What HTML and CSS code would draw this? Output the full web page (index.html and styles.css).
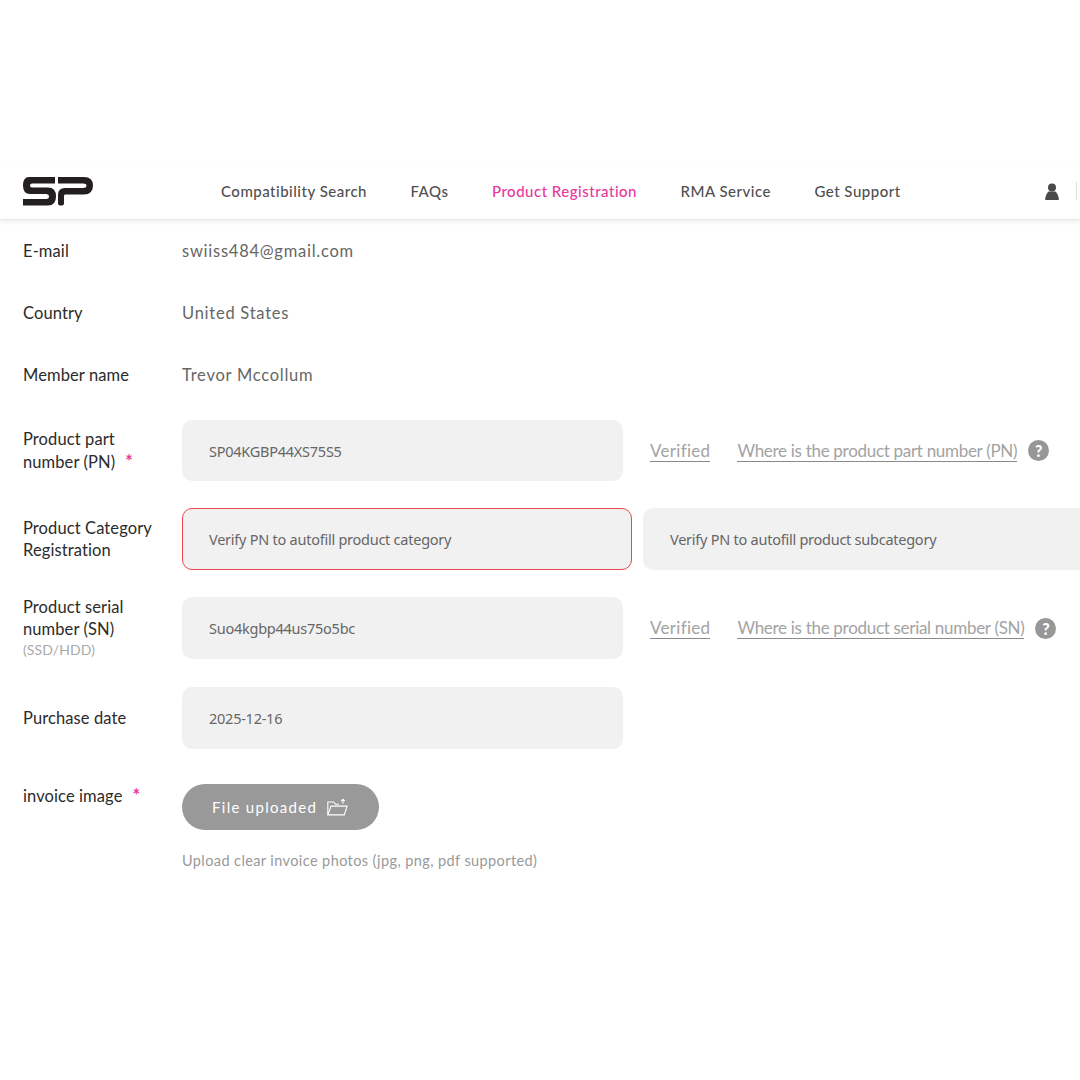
FILE: index.html
```html
<!DOCTYPE html>
<html lang="en">
<head>
    <meta charset="UTF-8">
    <meta name="viewport" content="width=device-width, initial-scale=1.0">
    <title>Product Registration</title>
    <link rel="stylesheet" href="styles.css">
</head>
<body>
    <header class="topbar">
        <svg class="logo" viewBox="0 0 70 29" width="70" height="29">
            <path fill="#231f20" d="M6 0H32V6.500H9Q7 6.500 7 8.500Q7 10.500 9 10.500H25Q33 10.500 33 19.500Q33 28.500 25 28.500H0V22H23Q26 22 26 19.500Q26 17 23 17H7Q0 17 0 8.500Q0 0 6 0Z"/>
            <path fill="#231f20" d="M35 0H61Q70 0 70 8.500Q70 17.500 61 17.500H42Q41 17.500 41 19V26.500Q41 28.500 39 28.500H37Q35 28.500 35 26.500V18Q35 11 42 11H60Q63.500 11 63.500 8.500Q63.500 6.500 60 6.500H35Z"/>
        </svg>
        <nav class="nav">
            <a>Compatibility Search</a>
            <a>FAQs</a>
            <a class="active">Product Registration</a>
            <a>RMA Service</a>
            <a>Get Support</a>
        </nav>
        <div class="user">
            <svg viewBox="0 0 16 17" width="16" height="17">
                <circle cx="8" cy="4.500" r="4" fill="#4a4a4a"/>
                <path fill="#4a4a4a" d="M4.500 8.500H11.500Q13 10 14 12.500L15 16Q15 17 14 17H2Q1 17 1 16L2 12.500Q3 10 4.500 8.500Z"/>
            </svg>
            <span class="user-sep"></span>
        </div>
    </header>

    <main class="form">
        <div class="row row-text">
            <div class="label">E-mail</div>
            <div class="value">swiiss484@gmail.com</div>
        </div>
        <div class="row row-text">
            <div class="label">Country</div>
            <div class="value">United States</div>
        </div>
        <div class="row row-text">
            <div class="label">Member name</div>
            <div class="value">Trevor Mccollum</div>
        </div>

        <div class="row row-input row-part">
            <div class="label">Product part number (PN)<span class="req">*</span></div>
            <div class="input">SP04KGBP44XS75S5</div>
            <a class="link link-verified">Verified</a>
            <a class="link">Where is the product part number (PN)</a>
            <span class="help">?</span>
        </div>

        <div class="row row-input">
            <div class="label">Product Category Registration</div>
            <div class="input input-error">Verify PN to autofill product category</div>
            <div class="input input-sub">Verify PN to autofill product subcategory</div>
        </div>

        <div class="row row-input">
            <div class="label">Product serial number (SN)<small>(SSD/HDD)</small></div>
            <div class="input">Suo4kgbp44us75o5bc</div>
            <a class="link link-verified">Verified</a>
            <a class="link">Where is the product serial number (SN)</a>
            <span class="help">?</span>
        </div>

        <div class="row row-input row-date">
            <div class="label">Purchase date</div>
            <div class="input">2025-12-16</div>
        </div>

        <div class="row row-upload">
            <div class="label">invoice image<span class="req">*</span></div>
            <div class="upload">
                <div class="upload-btn">
                    File uploaded
                    <svg viewBox="0 0 24 20" width="22" height="19" fill="none" stroke="#fff" stroke-width="1.200">
                        <path d="M2 18V4H8.500L10.500 6.500H14"/>
                        <path d="M2 18L5.500 8.500H23L20 18Z"/>
                        <path d="M18.500 6V1M16.500 3L18.500 1L20.500 3"/>
                    </svg>
                </div>
                <p class="hint">Upload clear invoice photos (jpg, png, pdf supported)</p>
            </div>
        </div>
    </main>
</body>
</html>
```

FILE: styles.css
```css
* {
    box-sizing: border-box;
}
html, body {
    overflow: hidden;
}
body {
    margin: 0;
    height: 1080px;
    padding-top: 163px;
    background: #fff;
    font-family: Lato, "Open Sans", sans-serif;
    color: #222;
}
.topbar {
    display: flex;
    align-items: center;
    height: 57px;
    padding-left: 23px;
    background: #fff;
    border-bottom: 1px solid #e8e8e8;
    box-shadow: 0 2px 4px rgba(0,0,0,0.07);
}
.logo {
    flex: none;
    margin-top: 1px;
}
.nav {
    display: flex;
    gap: 43.500px;
    margin-left: 128px;
    font-size: 15px;
    font-weight: 500;
    letter-spacing: 0.5px;
    color: #4f4f4f;
}
.nav .active {
    color: #e8389a;
}
.user {
    display: flex;
    align-items: center;
    margin-left: auto;
    gap: 16px;
    padding-right: 4px;
}
.user-sep {
    width: 1px;
    height: 18px;
    background: #ddd;
    margin-right: -1px;
}
.form {
    padding-left: 23px;
}
.row {
    display: flex;
    align-items: center;
}
.row-text {
    height: 62px;
}
.row-input {
    height: 62px;
    margin-bottom: 27px;
}
.row-part {
    height: 61px;
    margin-top: 14px;
}
.row-part .input {
    height: 61px;
}
.row-date {
    margin-top: 28px;
}
.label {
    flex: none;
    width: 159px;
    padding-right: 20px;
    font-size: 16.500px;
    line-height: 22px;
    letter-spacing: 0.1px;
    color: #2b2b2b;
}
.label small {
    display: block;
    font-size: 14px;
    line-height: 20px;
    color: #aaa;
}
.req {
    color: #e8389a;
    font-size: 18px;
    font-weight: 700;
    margin-left: 10px;
}
.value {
    font-size: 16.500px;
    letter-spacing: 0.75px;
    color: #666;
}
.input {
    display: flex;
    align-items: center;
    flex: none;
    width: 441px;
    height: 62px;
    padding-left: 27px;
    background: #f1f1f1;
    border-radius: 10px;
    font-family: "Noto Sans", sans-serif;
    font-size: 14.500px;
    letter-spacing: -0.25px;
    color: #666;
}
.input-error {
    width: 450px;
    border: 1px solid #e8484e;
    padding-left: 26px;
}
.input-sub {
    width: 460px;
    margin-left: 11px;
}
.link {
    font-size: 17px;
    line-height: 21px;
    letter-spacing: -0.3px;
    color: #a3a3a3;
    border-bottom: 1px solid #8a8a8a;
    margin-left: 27px;
}
.link-verified {
    letter-spacing: 0.3px;
}
.help {
    display: flex;
    align-items: center;
    justify-content: center;
    width: 21px;
    height: 21px;
    margin-left: 11px;
    border-radius: 50%;
    background: #979797;
    color: #fff;
    font-size: 16px;
    font-weight: 900;
}
.row-upload {
    align-items: flex-start;
    margin-top: 35px;
}
.upload-btn {
    display: flex;
    align-items: center;
    gap: 9px;
    width: 197px;
    height: 46px;
    padding-left: 30px;
    background: #999;
    border-radius: 23px;
    font-size: 15px;
    letter-spacing: 1.300px;
    color: #fff;
}
.hint {
    margin: 22px 0 0;
    font-size: 14.500px;
    letter-spacing: 0.4px;
    color: #999;
}
```
